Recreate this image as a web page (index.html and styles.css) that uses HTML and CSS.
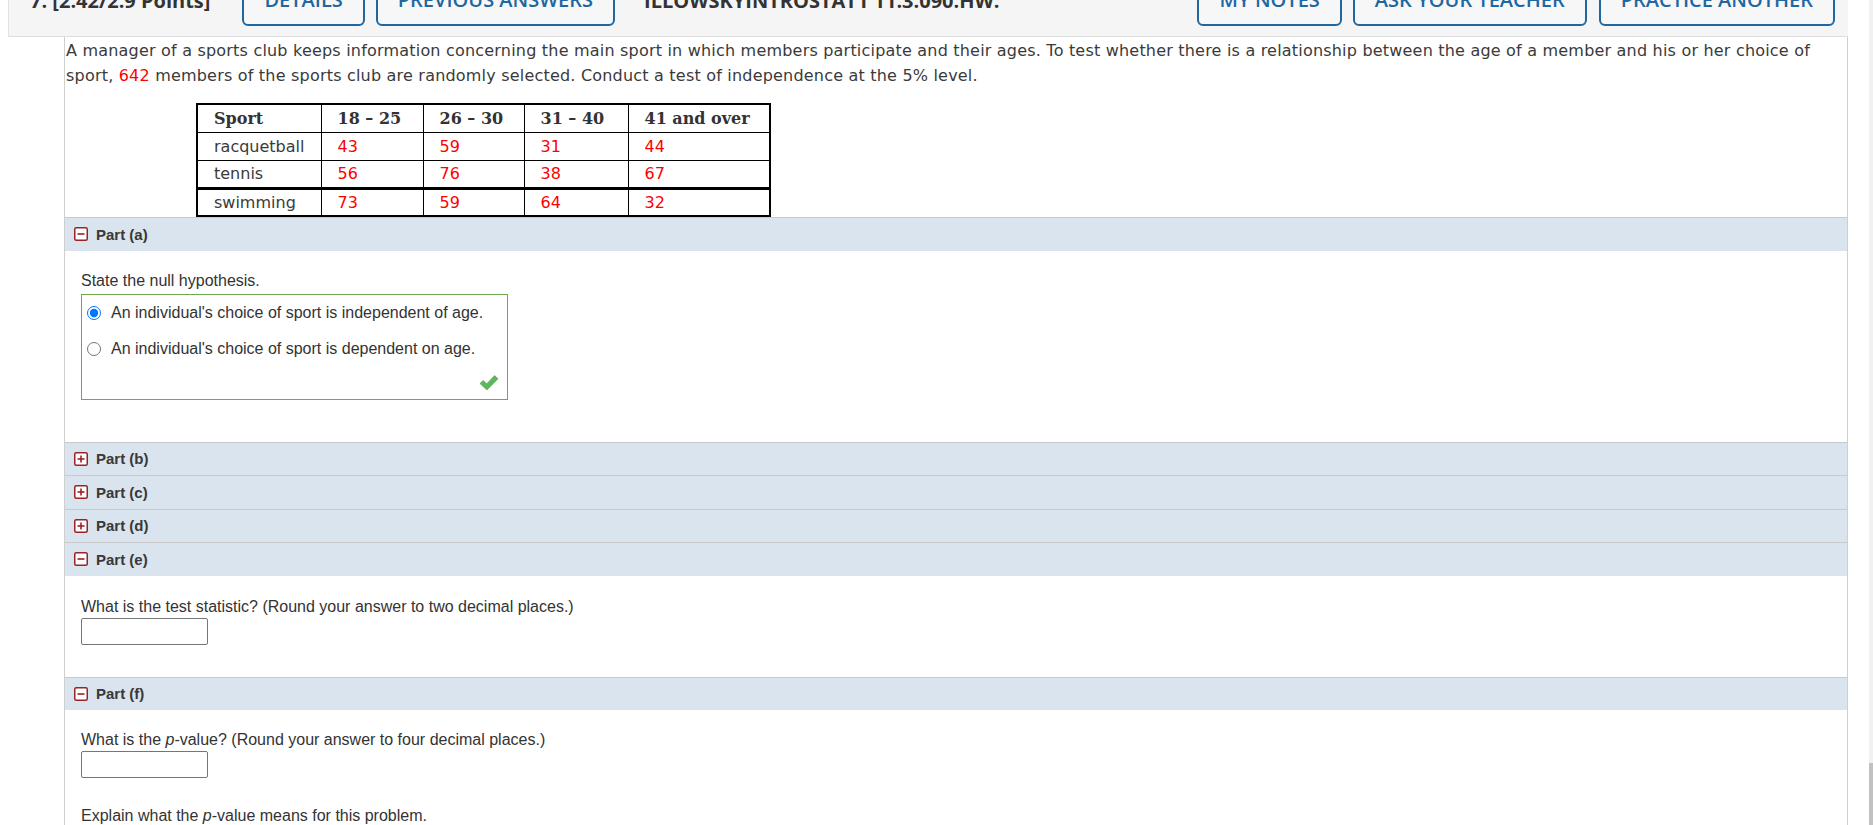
FILE: index.html
```html
<!DOCTYPE html>
<html lang="en">
<head>
    <meta charset="UTF-8">
    <meta name="viewport" content="width=device-width, initial-scale=1.0">
    <title>ILLOWSKYINTROSTAT1 11.3.090.HW.</title>
    <link rel="stylesheet" href="styles.css">
</head>
<body>
    <div class="page">
        <!-- question header bar -->
        <div class="q-header">
            <span class="q-num">7. [2.42/2.9 Points]</span>
            <button class="hdr-btn btn-details">DETAILS</button>
            <button class="hdr-btn btn-prev">PREVIOUS ANSWERS</button>
            <span class="q-ref">ILLOWSKYINTROSTAT1 11.3.090.HW.</span>
            <button class="hdr-btn btn-notes">MY NOTES</button>
            <button class="hdr-btn btn-ask">ASK YOUR TEACHER</button>
            <button class="hdr-btn btn-practice">PRACTICE ANOTHER</button>
        </div>

        <div class="q-body">
            <p class="q-text">A manager of a sports club keeps information concerning the main sport in which members participate and their ages. To test whether there is a relationship between the age of a member and his or her choice of sport, <span class="red">642</span> members of the sports club are randomly selected. Conduct a test of independence at the 5% level.</p>

            <table class="data">
                <tr>
                    <th class="c1">Sport</th><th class="c2">18 &ndash; 25</th><th class="c3">26 &ndash; 30</th><th class="c4">31 &ndash; 40</th><th class="c5">41 and over</th>
                </tr>
                <tr>
                    <td>racquetball</td><td class="red">43</td><td class="red">59</td><td class="red">31</td><td class="red">44</td>
                </tr>
                <tr>
                    <td>tennis</td><td class="red">56</td><td class="red">76</td><td class="red">38</td><td class="red">67</td>
                </tr>
                <tr class="thick">
                    <td>swimming</td><td class="red">73</td><td class="red">59</td><td class="red">64</td><td class="red">32</td>
                </tr>
            </table>

            <!-- Part (a) -->
            <div class="part-head">
                <svg class="toggle" width="14" height="14" viewBox="0 0 14 14"><rect x="0.75" y="0.75" width="12.5" height="12.5" rx="1.5" fill="#fff" stroke="#9b2323" stroke-width="1.5"/><rect x="3.5" y="6.2" width="7" height="1.6" fill="#9b2323"/></svg>
                Part (a)
            </div>
            <div class="part-body part-a">
                <p>State the null hypothesis.</p>
                <div class="answer-box">
                    <label class="choice"><input type="radio" name="h0" checked> An individual's choice of sport is independent of age.</label>
                    <label class="choice"><input type="radio" name="h0"> An individual's choice of sport is dependent on age.</label>
                    <div class="check-row">
                        <svg width="20" height="17" viewBox="0 0 20 17"><path d="M1 9.5 L4.2 6.4 L7.8 9.8 L15.6 1.6 L19 4.8 L7.9 16 Z" fill="#5cb85c" stroke="#4a9f4a" stroke-width="0.6" stroke-linejoin="round"/></svg>
                    </div>
                </div>
            </div>

            <!-- collapsed parts -->
            <div class="part-head">
                <svg class="toggle" width="14" height="14" viewBox="0 0 14 14"><rect x="0.75" y="0.75" width="12.5" height="12.5" rx="1.5" fill="#fff" stroke="#9b2323" stroke-width="1.5"/><rect x="3.5" y="6.2" width="7" height="1.6" fill="#9b2323"/><rect x="6.2" y="3.5" width="1.6" height="7" fill="#9b2323"/></svg>
                Part (b)
            </div>
            <div class="part-head">
                <svg class="toggle" width="14" height="14" viewBox="0 0 14 14"><rect x="0.75" y="0.75" width="12.5" height="12.5" rx="1.5" fill="#fff" stroke="#9b2323" stroke-width="1.5"/><rect x="3.5" y="6.2" width="7" height="1.6" fill="#9b2323"/><rect x="6.2" y="3.5" width="1.6" height="7" fill="#9b2323"/></svg>
                Part (c)
            </div>
            <div class="part-head">
                <svg class="toggle" width="14" height="14" viewBox="0 0 14 14"><rect x="0.75" y="0.75" width="12.5" height="12.5" rx="1.5" fill="#fff" stroke="#9b2323" stroke-width="1.5"/><rect x="3.5" y="6.2" width="7" height="1.6" fill="#9b2323"/><rect x="6.2" y="3.5" width="1.6" height="7" fill="#9b2323"/></svg>
                Part (d)
            </div>

            <!-- Part (e) -->
            <div class="part-head">
                <svg class="toggle" width="14" height="14" viewBox="0 0 14 14"><rect x="0.75" y="0.75" width="12.5" height="12.5" rx="1.5" fill="#fff" stroke="#9b2323" stroke-width="1.5"/><rect x="3.5" y="6.2" width="7" height="1.6" fill="#9b2323"/></svg>
                Part (e)
            </div>
            <div class="part-body part-e">
                <p>What is the test statistic? (Round your answer to two decimal places.)</p>
                <input type="text" class="answer">
            </div>

            <!-- Part (f) -->
            <div class="part-head">
                <svg class="toggle" width="14" height="14" viewBox="0 0 14 14"><rect x="0.75" y="0.75" width="12.5" height="12.5" rx="1.5" fill="#fff" stroke="#9b2323" stroke-width="1.5"/><rect x="3.5" y="6.2" width="7" height="1.6" fill="#9b2323"/></svg>
                Part (f)
            </div>
            <div class="part-body part-f">
                <p>What is the <i>p</i>-value? (Round your answer to four decimal places.)</p>
                <input type="text" class="answer">
                <p class="explain">Explain what the <i>p</i>-value means for this problem.</p>
            </div>
        </div>
    </div>

    <!-- scrollbar edge -->
    <div class="scroll-track"><div class="scroll-thumb"></div></div>
</body>
</html>
```

FILE: styles.css
```css
/* reset */
* {
    margin: 0;
    padding: 0;
    box-sizing: border-box;
}

body {
    display: flex;
    height: 825px;
    overflow: hidden;
    background: #fff;
    font-family: "Liberation Sans", Arial, sans-serif;
    color: #333;
}

.page {
    flex: none;
    width: 1848px;
    padding-left: 8px;
}

/* header bar (page is scrolled, top is cut off) */
.q-header {
    display: flex;
    align-items: flex-start;
    height: 61px;
    margin-top: -24px;
    padding: 6px 13px 0 21px;
    background: #f5f5f5;
    border-left: 1px solid #e2e2e2;
    border-bottom: 1px solid #dedede;
    font-family: "Open Sans", sans-serif;
}

.q-num,
.q-ref {
    margin-top: 5px;
    font-size: 20px;
    line-height: 28px;
    font-weight: 700;
    color: #333;
    white-space: nowrap;
}

.q-ref {
    margin-left: 29px;
    margin-right: auto;
}

.hdr-btn {
    height: 44px;
    padding: 0 20px 8px;
    background: #f7f7f7;
    border: 2px solid #1f67a1;
    border-radius: 6px;
    color: #1f67a1;
    font-family: "Open Sans", sans-serif;
    font-size: 20px;
    font-weight: 600;
    line-height: 32px;
    white-space: nowrap;
}

.btn-details { margin-left: 32px; }
.btn-prev { margin-left: 11px; }
.btn-notes { padding: 0 20px 8px; }
.btn-ask { margin-left: 11px; }
.btn-practice { margin-left: 12px; }

/* question body */
.q-body {
    margin-left: 56px;
    border-left: 1px solid #cfcfcf;
    border-right: 1px solid #cfcfcf;
    background: #fff;
}

.q-text {
    padding: 1px 20px 0 1px;
    font-family: "DejaVu Sans", Verdana, sans-serif;
    font-size: 16px;
    letter-spacing: 0.2px;
    line-height: 25px;
    color: #3a3a3a;
}

.red {
    color: #f00;
}

/* data table */
.data {
    margin: 15px 0 0 131px;
    border-collapse: collapse;
    border: 2px solid #000;
    font-family: "DejaVu Sans", Verdana, sans-serif;
    font-size: 16px;
    color: #3a3a3a;
}

.data th,
.data td {
    height: 28px;
    padding: 0 16px;
    border: 1px solid #000;
    text-align: left;
    font-weight: normal;
    white-space: nowrap;
}

.data th {
    font-family: "DejaVu Serif", Georgia, serif;
    font-weight: bold;
    color: #333;
}

.data .c1 { width: 124px; }
.data .c2 { width: 102px; }
.data .c3 { width: 101px; }
.data .c4 { width: 104px; }
.data .c5 { width: 142px; }

.data tr.thick td {
    border-top: 3px solid #000;
}

.data td.red {
    color: #f00;
}

/* parts */
.part-head {
    display: flex;
    align-items: center;
    height: 33.5px;
    padding-left: 9px;
    background: #d9e4ee;
    border-top: 1px solid #c9c9c9;
    font-size: 15px;
    font-weight: bold;
    color: #383838;
}

.toggle {
    margin-right: 8px;
}

.part-body {
    padding: 21px 16px 0;
    font-size: 16px;
    line-height: 18px;
    color: #333;
}

.part-a { padding-bottom: 42px; }
.part-e { padding-top: 22px; padding-bottom: 32px; }

.answer-box {
    width: 427px;
    margin-top: 4px;
    border: 1px solid #6ea94a;
}

.choice {
    display: flex;
    align-items: center;
    height: 36px;
    padding-left: 5px;
}

.choice input {
    width: 14px;
    height: 14px;
    margin: 0 10px 0 0;
}

.check-row {
    display: flex;
    justify-content: flex-end;
    align-items: center;
    height: 32px;
    padding-right: 8px;
}

.answer {
    display: block;
    width: 127px;
    height: 27px;
    margin-top: 2px;
    border: 1px solid #767676;
    border-radius: 2px;
}

.explain {
    margin-top: 29px;
}

/* scrollbar edge on the far right */
.scroll-track {
    display: flex;
    flex-direction: column;
    justify-content: flex-end;
    width: 4px;
    margin-left: auto;
    background: #f1f1f1;
}

.scroll-thumb {
    height: 62px;
    background: #c1c1c1;
}
```
